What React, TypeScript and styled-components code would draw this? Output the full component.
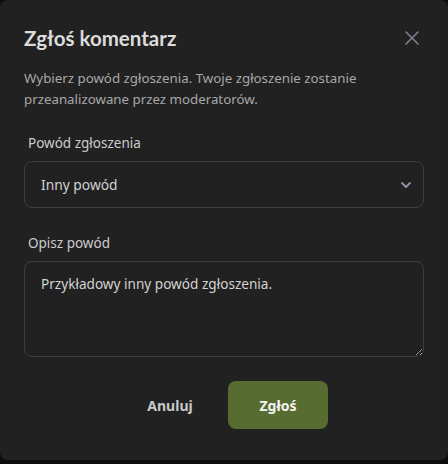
import styled, { createGlobalStyle } from 'styled-components'

const GlobalStyle = createGlobalStyle`
  html, body {
    margin: 0;
    padding: 0;
    background: #0d0d0d;
  }
  body {
    font-family: 'Noto Sans', 'Open Sans', sans-serif;
  }
`

const Dialog = styled.div`
  box-sizing: border-box;
  width: 448px;
  height: 460px;
  background: #212121;
  border-radius: 8px;
  padding: 24px 24px 0;
  display: flex;
  flex-direction: column;
`

const Header = styled.div`
  display: flex;
  justify-content: space-between;
  align-items: center;
  height: 28px;
`

const Title = styled.h2`
  margin: 0;
  font-family: Lato, 'Noto Sans', sans-serif;
  font-size: 20.5px;
  font-weight: 700;
  line-height: 28px;
  color: #dcdcdc;
`

const CloseButton = styled.button`
  border: 0;
  background: none;
  padding: 0;
  margin-right: 2px;
  width: 20px;
  height: 20px;
  display: flex;
  align-items: center;
  justify-content: center;
  color: #7c8291;
  cursor: pointer;
`

const Description = styled.p`
  margin: 16px 0 0;
  font-size: 13.3px;
  line-height: 21px;
  color: #a8a8a8;
`

const Field = styled.div<{ $top: number }>`
  display: flex;
  flex-direction: column;
  gap: 8px;
  margin-top: ${({ $top }) => $top}px;
`

const Label = styled.label`
  padding-left: 4px;
  font-size: 13.5px;
  line-height: 20px;
  color: #cccccc;
`

const SelectBox = styled.div`
  box-sizing: border-box;
  height: 47px;
  border: 1px solid #3d3d3d;
  border-radius: 8px;
  padding: 0 11px 0 16px;
  display: flex;
  align-items: center;
  justify-content: space-between;
  font-size: 13.8px;
  color: #d2d2d2;
`

const Chevron = styled.span`
  display: flex;
  color: #8a91a3;
`

const TextArea = styled.textarea`
  box-sizing: border-box;
  height: 96px;
  background: transparent;
  border: 1px solid #3d3d3d;
  border-radius: 8px;
  padding: 12px 16px;
  font-family: inherit;
  font-size: 13.6px;
  line-height: 20px;
  color: #d2d2d2;
  resize: vertical;
  outline: none;
`

const Actions = styled.div`
  display: flex;
  justify-content: center;
  gap: 8px;
  margin-top: 24px;
`

const Button = styled.button<{ $primary?: boolean }>`
  width: 100px;
  height: 48px;
  border: 0;
  border-radius: 8px;
  font-family: inherit;
  font-size: 14px;
  font-weight: 700;
  background: ${({ $primary }) => ($primary ? '#566c30' : 'transparent')};
  color: ${({ $primary }) => ($primary ? '#f4f4f4' : '#c8c8c8')};
  cursor: pointer;
`

export default function App() {
  return (
    <>
      <GlobalStyle />
      <Dialog>
        <Header>
          <Title>Zgłoś komentarz</Title>
          <CloseButton aria-label="Zamknij">
            <svg width="16" height="16" viewBox="0 0 16 16" fill="none" stroke="currentColor" strokeWidth="1.6" strokeLinecap="round">
              <path d="M2 2l12 12M14 2L2 14" />
            </svg>
          </CloseButton>
        </Header>
        <Description>
          Wybierz powód zgłoszenia. Twoje zgłoszenie zostanie przeanalizowane przez moderatorów.
        </Description>
        <Field $top={23}>
          <Label>Powód zgłoszenia</Label>
          <SelectBox>
            <span>Inny powód</span>
            <Chevron>
              <svg width="12" height="12" viewBox="0 0 12 12" fill="none" stroke="currentColor" strokeWidth="2" strokeLinecap="round" strokeLinejoin="round">
                <path d="M2 4l4 4 4-4" />
              </svg>
            </Chevron>
          </SelectBox>
        </Field>
        <Field $top={25}>
          <Label>Opisz powód</Label>
          <TextArea defaultValue="Przykładowy inny powód zgłoszenia." />
        </Field>
        <Actions>
          <Button>Anuluj</Button>
          <Button $primary>Zgłoś</Button>
        </Actions>
      </Dialog>
    </>
  )
}
